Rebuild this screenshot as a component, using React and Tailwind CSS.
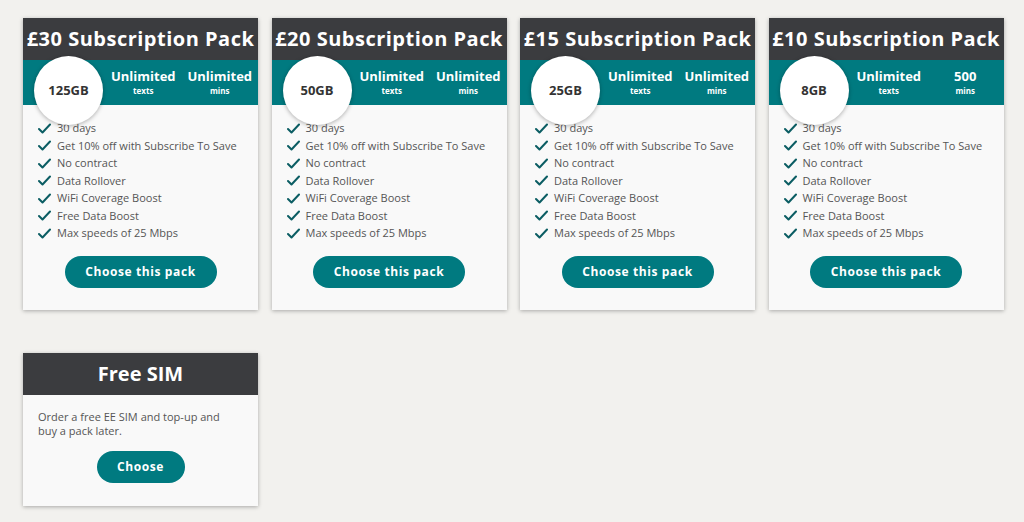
const packs = [
  { price: "£30", data: "125GB", texts: "Unlimited", mins: "Unlimited" },
  { price: "£20", data: "50GB", texts: "Unlimited", mins: "Unlimited" },
  { price: "£15", data: "25GB", texts: "Unlimited", mins: "Unlimited" },
  { price: "£10", data: "8GB", texts: "Unlimited", mins: "500" },
]

const features = [
  "30 days",
  "Get 10% off with Subscribe To Save",
  "No contract",
  "Data Rollover",
  "WiFi Coverage Boost",
  "Free Data Boost",
  "Max speeds of 25 Mbps",
]

function Tick() {
  return (
    <svg width="13" height="11" viewBox="0 0 13 11" className="shrink-0">
      <path d="M1 6 L4.5 9.5 L12 1.5" fill="none" stroke="#0b5d63" strokeWidth="2" strokeLinecap="round" strokeLinejoin="round" />
    </svg>
  )
}

function PackCard({ price, data, texts, mins }) {
  return (
    <div className="flex h-[292px] w-[235px] flex-col bg-[#f9f9f9] shadow-[0_1px_4px_rgba(0,0,0,0.3)]">
      <div className="flex h-[42px] items-center justify-center whitespace-nowrap bg-[#3b3c3f] text-[20px] font-bold tracking-[0.5px] text-white">
        {price} Subscription Pack
      </div>
      <div className="relative flex h-[45px] items-center bg-[#007a80] pl-[82px] text-white">
        <div className="absolute left-[11px] top-[-4px] flex h-[69px] w-[69px] items-center justify-center rounded-full bg-white text-[13px] font-bold text-[#333] shadow-[0_1px_4px_rgba(0,0,0,0.3)]">
          {data}
        </div>
        <div className="flex flex-1 flex-col items-center leading-none">
          <span className="text-[13px] font-bold">{texts}</span>
          <span className="mt-[4px] text-[8px] font-bold">texts</span>
        </div>
        <div className="flex flex-1 flex-col items-center leading-none">
          <span className="text-[13px] font-bold">{mins}</span>
          <span className="mt-[4px] text-[8px] font-bold">mins</span>
        </div>
      </div>
      <ul className="mt-[16px] flex flex-col gap-[3px] pl-[15px] text-[11px] leading-[14.5px] text-[#555]">
        {features.map((f) => (
          <li key={f} className="flex items-center gap-[6px]">
            <Tick />
            <span>{f}</span>
          </li>
        ))}
      </ul>
      <div className="mt-[15px] flex justify-center">
        <button className="h-[32px] w-[152px] rounded-full bg-[#007a80] text-[12px] font-bold tracking-[0.6px] text-white">
          Choose this pack
        </button>
      </div>
    </div>
  )
}

export default function App() {
  return (
    <div className="min-h-[522px] bg-[#f2f1ee] pl-[23px] pt-[18px] font-['Open_Sans',sans-serif]">
      <div className="flex gap-[13.5px]">
        {packs.map((p) => (
          <PackCard key={p.price} {...p} />
        ))}
      </div>
      <div className="mt-[43px] flex h-[153px] w-[235px] flex-col bg-[#f9f9f9] shadow-[0_1px_4px_rgba(0,0,0,0.3)]">
        <div className="flex h-[42px] items-center justify-center bg-[#3b3c3f] text-[20px] font-bold text-white">
          Free SIM
        </div>
        <p className="mt-[15px] pl-[15px] pr-[30px] text-[11px] leading-[14px] text-[#555]">
          Order a free EE SIM and top-up and buy a pack later.
        </p>
        <div className="mt-[13px] flex justify-center">
          <button className="h-[32px] w-[88px] rounded-full bg-[#007a80] text-[12px] font-bold tracking-[0.6px] text-white">
            Choose
          </button>
        </div>
      </div>
    </div>
  )
}
